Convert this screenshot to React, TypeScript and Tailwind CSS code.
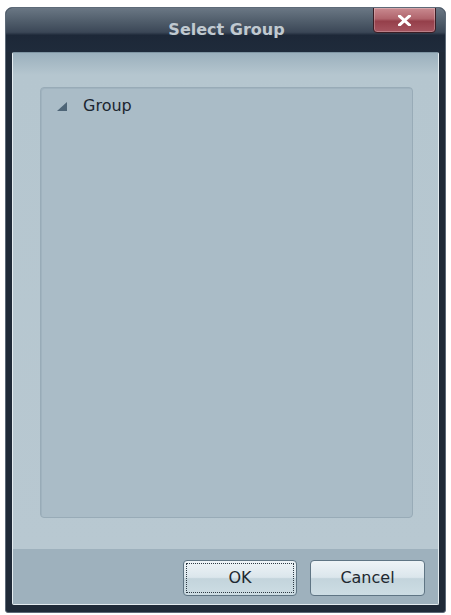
import React from "react";

export default function App() {
  return (
    <div className="w-[451px] h-[615px] bg-white relative" style={{ fontFamily: '"DejaVu Sans", sans-serif' }}>
      <div className="absolute left-[5px] top-[7px] w-[441px] h-[606px] rounded-t-[7px] rounded-b-[3px] border border-[#5d6a78] bg-[#1f2a38] flex flex-col overflow-hidden">
        {/* Title bar */}
        <div className="relative h-[44px] shrink-0 bg-[linear-gradient(to_bottom,#6a7784_0%,#4c5967_35%,#3b4757_55%,#1d2838_62%,#1f2b3b_100%)] flex items-center justify-center">
          <span className="text-[16px] font-bold text-[#c0c9d0] -mt-[1px] pl-[2px]">Select Group</span>
          <div className="absolute right-[9px] top-[-1px] w-[63px] h-[26px] rounded-b-[4px] border border-[#3a1d24] bg-[linear-gradient(to_bottom,#c98a90_0%,#b0646c_45%,#953f4a_55%,#a65560_100%)] flex items-center justify-center shadow-[inset_0_0_0_1px_rgba(255,255,255,0.25)]">
            <svg width="13" height="11" viewBox="0 0 13 11">
              <path d="M1.5 1 L11.5 10 M11.5 1 L1.5 10" stroke="#ffffff" strokeWidth="3" strokeLinecap="square" />
            </svg>
          </div>
        </div>
        {/* Content */}
        <div className="flex-1 mx-[6px] mb-[7px] flex flex-col bg-[#b7c7d0] rounded-[2px] border border-[#e4ecf0] border-t-[#7f95a3]">
          <div className="flex-1 flex flex-col bg-[linear-gradient(to_bottom,#9bb0bd_0px,#b5c6cf_22px,#b8c8d1_100%)]">
            <div className="mt-[34px] ml-[27px] mr-[25px] h-[431px] rounded-[4px] border border-[#98abb7] bg-[#aabcc7] shadow-[inset_1px_1px_0_#a0b3bf]">
              <div className="flex items-center h-[20px] mt-[8px] pl-[16px]">
                <svg width="10" height="9" viewBox="0 0 10 9" className="mt-[1px]">
                  <path d="M0 9 L10 9 L10 0 Z" fill="#4e6577" />
                </svg>
                <span className="ml-[16px] text-[16px] text-[#1c2630]">Group</span>
              </div>
            </div>
          </div>
          <div className="h-[55px] shrink-0 bg-[#9eb1bd] flex items-start justify-end pt-[11px] pr-[13px] gap-[13px]">
            <button className="w-[114px] h-[36px] rounded-[4px] border border-[#5f7584] bg-[linear-gradient(to_bottom,#eef4f7_0%,#dbe6ec_48%,#c3d4dc_52%,#cddde4_100%)] p-[2px]">
              <div className="w-full h-full border border-dotted border-[#2d3a44] flex items-center justify-center text-[16px] text-[#1e2830]">OK</div>
            </button>
            <button className="w-[115px] h-[36px] rounded-[4px] border border-[#5f7584] bg-[linear-gradient(to_bottom,#eef4f7_0%,#dbe6ec_48%,#c3d4dc_52%,#cddde4_100%)] flex items-center justify-center text-[16px] text-[#1e2830]">
              Cancel
            </button>
          </div>
        </div>
      </div>
    </div>
  );
}
